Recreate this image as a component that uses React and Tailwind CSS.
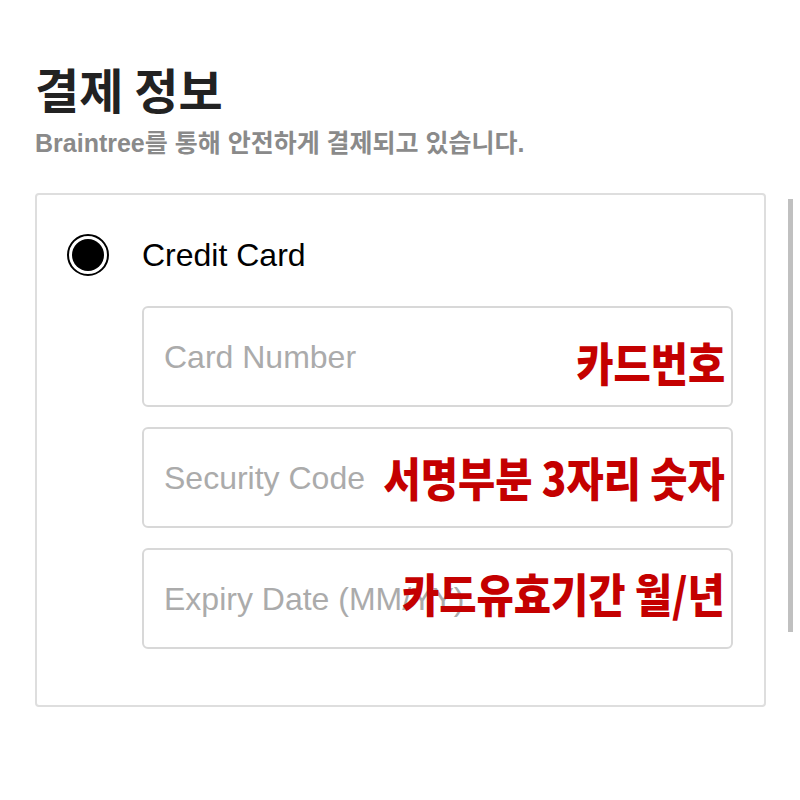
const sans = 'font-["Liberation_Sans","Noto_Sans_CJK_KR",sans-serif]';

const Field = ({ placeholder, note, noteTop }) => (
  <div className="relative flex h-[101px] w-[591px] items-center rounded-[6px] border-2 border-[#d8d8d8] pl-[20px]">
    <span className="text-[32px] leading-none text-[#ababab]">{placeholder}</span>
    {/* 빨간 안내 문구 */}
    <span
      className={`absolute right-[6px] ${noteTop} origin-right scale-x-[0.88] whitespace-nowrap font-["Noto_Sans_CJK_KR",sans-serif] text-[46px] font-black leading-none text-[#c40000]`}
    >
      {note}
    </span>
  </div>
);

export default function App() {
  return (
    <div className={`relative min-h-[800px] bg-white pl-[35px] pt-[64px] ${sans}`}>
      <h1 className='font-["Noto_Sans_CJK_KR",sans-serif] text-[48px] font-bold leading-none text-[#222]'>
        결제 정보
      </h1>
      <p className="mt-[19px] text-[25px] font-semibold leading-none text-[#8a8a8a]">
        Braintree를 통해 안전하게 결제되고 있습니다.
      </p>

      <div className="mt-[37px] h-[514px] w-[731px] rounded-[4px] border-2 border-[#dedede] pl-[30px] pt-[39px]">
        <div className="flex items-center gap-[33px]">
          <div className="flex h-[42px] w-[42px] rounded-full border-2 border-black p-[3px]">
            <div className="flex-1 rounded-full bg-black" />
          </div>
          <span className="text-[32px] leading-none text-black">Credit Card</span>
        </div>

        <div className="ml-[75px] mt-[30px] flex flex-col gap-[20px]">
          <Field placeholder="Card Number" note="카드번호" noteTop="top-[30px]" />
          <Field placeholder="Security Code" note="서명부분 3자리 숫자" noteTop="top-[24px]" />
          <Field placeholder="Expiry Date (MM/YY)" note="카드유효기간 월/년" noteTop="top-[19px]" />
        </div>
      </div>

      {/* 스크롤바 */}
      <div className="absolute left-[788px] top-[199px] h-[433px] w-[5px] bg-[#c0c0c0]" />
    </div>
  );
}
